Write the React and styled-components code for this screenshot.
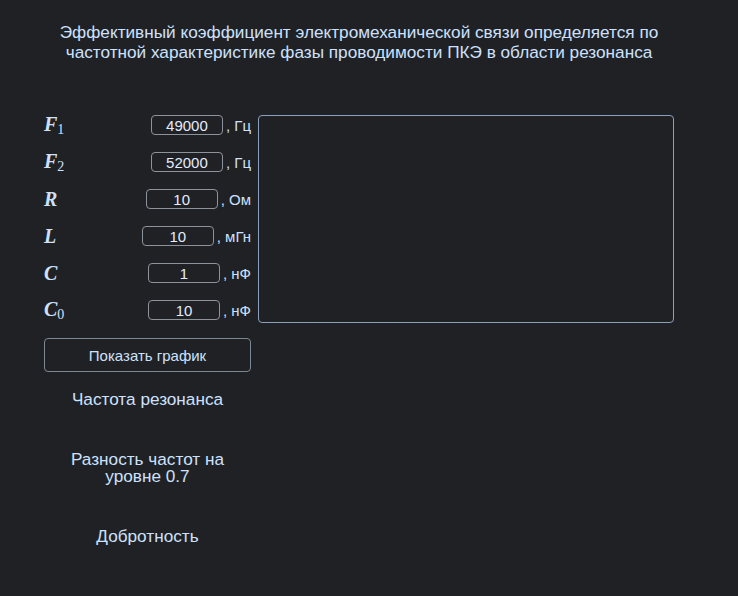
import React, { useState } from 'react';
import styled, { createGlobalStyle } from 'styled-components';

const GlobalStyle = createGlobalStyle`
  * {
    box-sizing: border-box;
    margin: 0;
    padding: 0;
  }
  body {
    background: #202124;
    color: #cde1ff;
    font-family: 'Liberation Sans', Arial, sans-serif;
  }
`;

const Page = styled.div`
  width: 738px;
  min-height: 596px;
  padding-top: 22px;
`;

const Title = styled.h1`
  width: 718px;
  text-align: center;
  font-size: 17.2px;
  font-weight: 400;
  line-height: 20px;
  color: #cde1ff;
`;

const Layout = styled.div`
  display: grid;
  grid-template-columns: 207px 416px;
  column-gap: 7px;
  margin: 53px 0 0 44px;
  align-items: start;
`;

const LeftCol = styled.div`
  display: flex;
  flex-direction: column;
`;

const Params = styled.div`
  display: flex;
  flex-direction: column;
  gap: 17px;
`;

const Row = styled.div`
  display: flex;
  align-items: center;
  height: 20px;
`;

const Symbol = styled.span`
  font-family: 'Liberation Serif', 'DejaVu Serif', serif;
  font-style: italic;
  font-weight: 700;
  font-size: 20px;
  color: #cde1ff;
  sub {
    font-style: normal;
    font-weight: 400;
    font-size: 14px;
    vertical-align: -3px;
  }
`;

const Field = styled.div`
  margin-left: auto;
  display: flex;
  align-items: center;
  gap: 3px;
`;

const Input = styled.input`
  width: 72px;
  height: 20px;
  border: 1px solid #8d939b;
  border-radius: 4px;
  background: transparent;
  color: #e3ecff;
  text-align: center;
  font-family: 'Liberation Sans', Arial, sans-serif;
  font-size: 15px;
  outline: none;
`;

const Unit = styled.span`
  font-size: 15px;
  color: #cde1ff;
  white-space: nowrap;
`;

const Button = styled.button`
  margin-top: 18px;
  height: 34px;
  width: 100%;
  background: transparent;
  border: 1px solid #7c8794;
  border-radius: 4px;
  color: #cde1ff;
  font-family: 'Liberation Sans', Arial, sans-serif;
  font-size: 15px;
  cursor: pointer;
`;

const Results = styled.div`
  margin-top: 19px;
  display: flex;
  flex-direction: column;
  gap: 43px;
`;

const Result = styled.div`
  text-align: center;
  font-size: 17.2px;
  line-height: 17px;
  padding: 0 18px;
`;

const Chart = styled.div`
  height: 208px;
  border: 1px solid #8aa0bd;
  border-radius: 4px;
`;

const params = [
  { key: 'f1', sym: 'F', sub: '1', value: '49000', unit: 'Гц' },
  { key: 'f2', sym: 'F', sub: '2', value: '52000', unit: 'Гц' },
  { key: 'r', sym: 'R', value: '10', unit: 'Ом' },
  { key: 'l', sym: 'L', value: '10', unit: 'мГн' },
  { key: 'c', sym: 'C', value: '1', unit: 'нФ' },
  { key: 'c0', sym: 'C', sub: '0', value: '10', unit: 'нФ' },
];

export default function App() {
  const [values, setValues] = useState(
    Object.fromEntries(params.map(p => [p.key, p.value]))
  );

  const handleChange = (e) => {
    const { name, value } = e.target;
    setValues({ ...values, [name]: value });
  };

  return (
    <>
      <GlobalStyle />
      <Page>
        <Title>
          Эффективный коэффициент электромеханической связи определяется по
          <br />
          частотной характеристике фазы проводимости ПКЭ в области резонанса
        </Title>
        <Layout>
          <LeftCol>
            <Params>
              {params.map(p => (
                <Row key={p.key}>
                  <Symbol>
                    {p.sym}
                    {p.sub && <sub>{p.sub}</sub>}
                  </Symbol>
                  <Field>
                    <Input name={p.key} value={values[p.key]} onChange={handleChange} />
                    <Unit>, {p.unit}</Unit>
                  </Field>
                </Row>
              ))}
            </Params>
            <Button>Показать график</Button>
            <Results>
              <Result>Частота резонанса</Result>
              <Result>Разность частот на уровне 0.7</Result>
              <Result>Добротность</Result>
            </Results>
          </LeftCol>
          <Chart />
        </Layout>
      </Page>
    </>
  );
}
